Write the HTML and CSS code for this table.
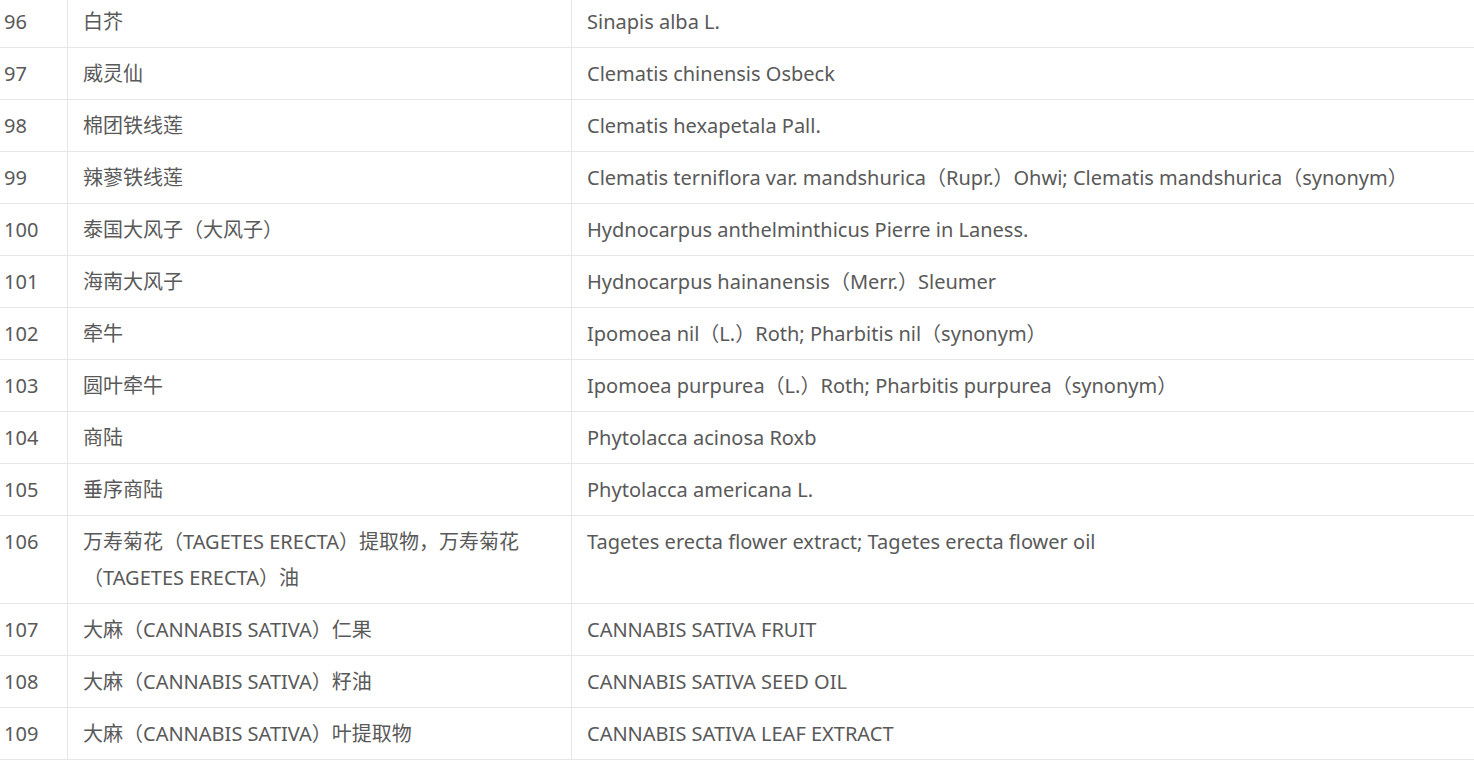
FILE: index.html
```html
<!DOCTYPE html>
<html lang="zh-CN">
<head>
<meta charset="utf-8">
<title>植物名录</title>
<link rel="stylesheet" href="styles.css">
</head>
<body>
<div class="wrap">
<table class="list">
<colgroup><col class="c-no"><col class="c-cn"><col class="c-la"></colgroup>
<tbody>
<tr><td class="no">96</td><td>白芥</td><td>Sinapis alba L.</td></tr>
<tr><td class="no">97</td><td>威灵仙</td><td>Clematis chinensis Osbeck</td></tr>
<tr><td class="no">98</td><td>棉团铁线莲</td><td>Clematis hexapetala Pall.</td></tr>
<tr><td class="no">99</td><td>辣蓼铁线莲</td><td>Clematis terniflora var. mandshurica（Rupr.）Ohwi; Clematis mandshurica（synonym）</td></tr>
<tr><td class="no">100</td><td>泰国大风子（大风子）</td><td>Hydnocarpus anthelminthicus Pierre in Laness.</td></tr>
<tr><td class="no">101</td><td>海南大风子</td><td>Hydnocarpus hainanensis（Merr.）Sleumer</td></tr>
<tr><td class="no">102</td><td>牵牛</td><td>Ipomoea nil（L.）Roth; Pharbitis nil（synonym）</td></tr>
<tr><td class="no">103</td><td>圆叶牵牛</td><td>Ipomoea purpurea（L.）Roth; Pharbitis purpurea（synonym）</td></tr>
<tr><td class="no">104</td><td>商陆</td><td>Phytolacca acinosa Roxb</td></tr>
<tr><td class="no">105</td><td>垂序商陆</td><td>Phytolacca americana L.</td></tr>
<tr><td class="no">106</td><td>万寿菊花（TAGETES ERECTA）提取物，万寿菊花（TAGETES ERECTA）油</td><td>Tagetes erecta flower extract; Tagetes erecta flower oil</td></tr>
<tr><td class="no">107</td><td>大麻（CANNABIS SATIVA）仁果</td><td>CANNABIS SATIVA FRUIT</td></tr>
<tr><td class="no">108</td><td>大麻（CANNABIS SATIVA）籽油</td><td>CANNABIS SATIVA SEED OIL</td></tr>
<tr><td class="no">109</td><td>大麻（CANNABIS SATIVA）叶提取物</td><td>CANNABIS SATIVA LEAF EXTRACT</td></tr>
</tbody>
</table>
</div>
</body>
</html>
```

FILE: styles.css
```css
html, body {
  margin: 0;
  padding: 0;
  background: #fff;
}
.wrap {
  margin-top: -4px;
}
.list {
  width: 1474px;
  table-layout: fixed;
  border-collapse: separate;
  border-spacing: 0;
  font-family: "Noto Sans", "Noto Sans CJK SC", sans-serif;
  font-size: 20px;
  line-height: 36px;
  color: #595959;
}
.c-no { width: 68px; }
.c-cn { width: 504px; }
.list td {
  box-sizing: border-box;
  padding: 8px 16px 7px 15px;
  border-bottom: 1px solid #e6e6e6;
  border-right: 1px solid #e6e6e6;
  vertical-align: top;
  text-align: left;
  word-break: normal;
}
.list td:last-child {
  border-right: 0;
}
.list td.no {
  padding-left: 4px;
  padding-right: 4px;
}
```
